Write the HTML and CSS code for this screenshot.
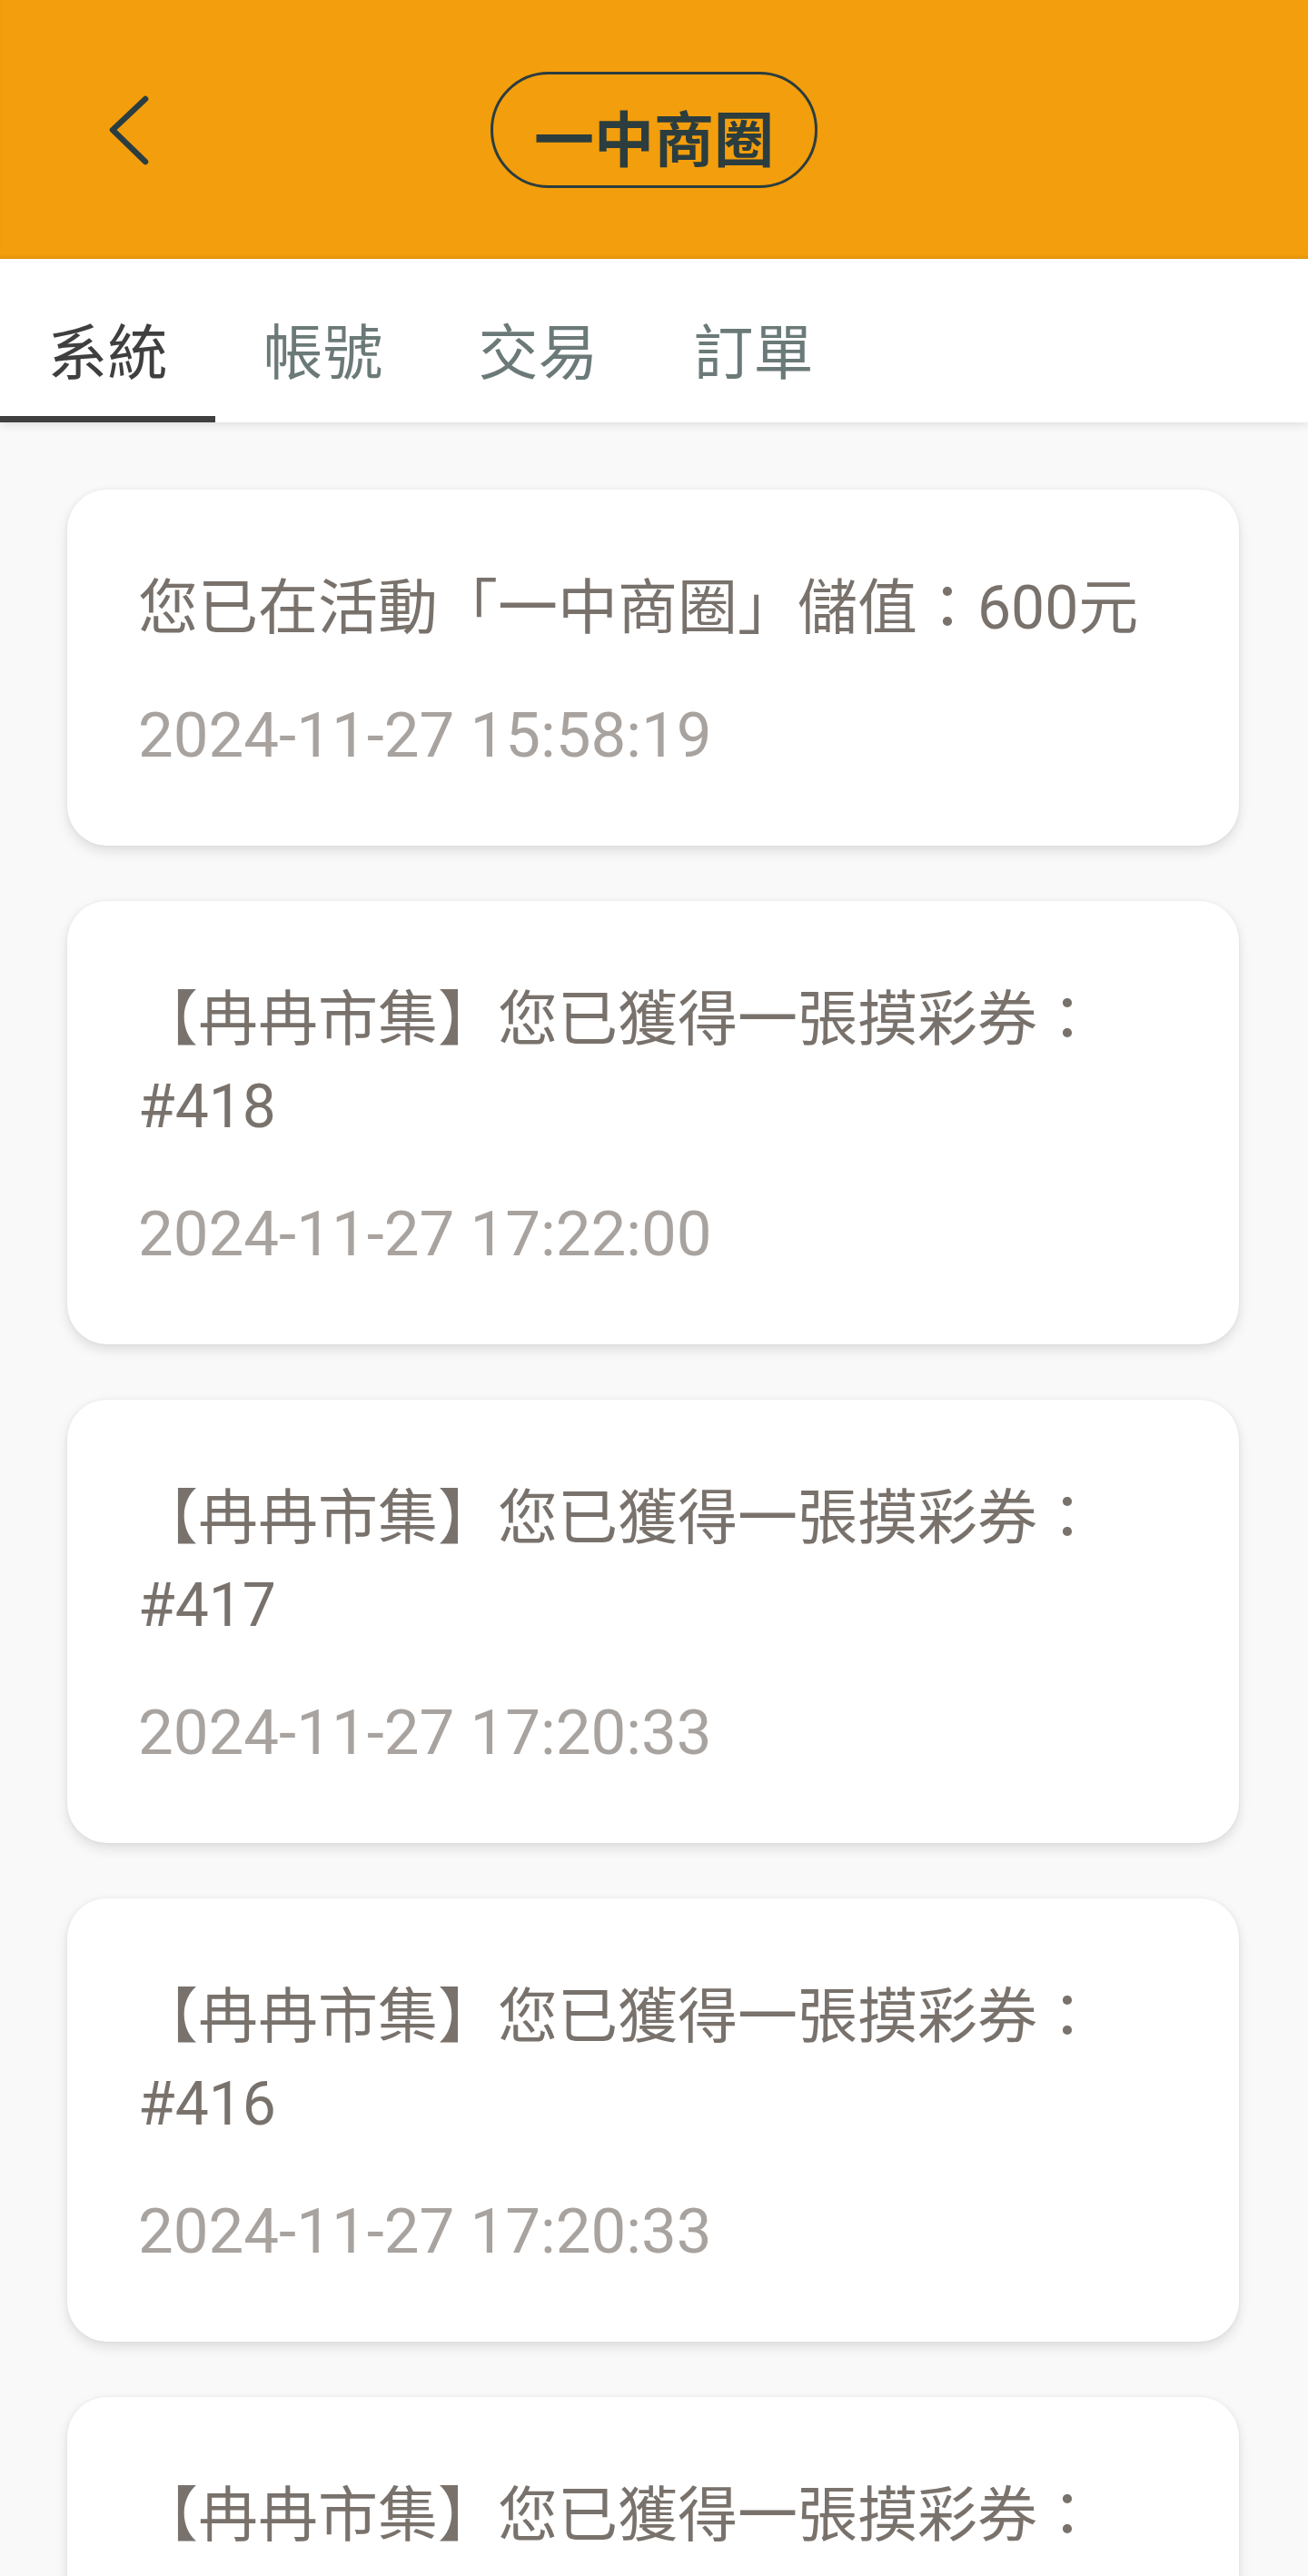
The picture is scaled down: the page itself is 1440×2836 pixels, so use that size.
FILE: index.html
```html
<!DOCTYPE html>
<html lang="zh-Hant">
<head>
<meta charset="utf-8">
<title>一中商圈</title>
<link rel="stylesheet" href="styles.css">
</head>
<body>
<div class="screen">
  <header class="topbar">
    <div class="topbar-left">
      <svg class="back" viewBox="0 0 60 84" width="60" height="84" aria-label="返回">
        <path d="M48 8 L12 42 L48 77" fill="none" stroke="#2b3d40" stroke-width="6.5" stroke-linecap="round" stroke-linejoin="round"/>
      </svg>
    </div>
    <div class="title-pill"><span>一中商圈</span></div>
    <div class="topbar-right"></div>
  </header>

  <nav class="tabs">
    <div class="tab active">系統</div>
    <div class="tab">帳號</div>
    <div class="tab">交易</div>
    <div class="tab">訂單</div>
  </nav>

  <main class="list">
    <div class="card">
      <div class="msg">您已在活動「一中商圈」儲值：600元</div>
      <div class="date">2024-11-27 15:58:19</div>
    </div>
    <div class="card">
      <div class="msg">【冉冉市集】您已獲得一張摸彩券：#418</div>
      <div class="date">2024-11-27 17:22:00</div>
    </div>
    <div class="card">
      <div class="msg">【冉冉市集】您已獲得一張摸彩券：#417</div>
      <div class="date">2024-11-27 17:20:33</div>
    </div>
    <div class="card">
      <div class="msg">【冉冉市集】您已獲得一張摸彩券：#416</div>
      <div class="date">2024-11-27 17:20:33</div>
    </div>
    <div class="card">
      <div class="msg">【冉冉市集】您已獲得一張摸彩券：#415</div>
      <div class="date">2024-11-27 17:20:33</div>
    </div>
  </main>
</div>
</body>
</html>
```

FILE: styles.css
```css
* { box-sizing: border-box; }

html, body {
  margin: 0;
  padding: 0;
  background: #f9f9f9;
  font-family: Roboto, "Noto Sans CJK TC", "Noto Sans CJK SC", sans-serif;
}

.screen {
  width: 1440px;
  height: 100vh;
  overflow: hidden;
  background: #f9f9f9;
}

/* ---------- top bar ---------- */
.topbar {
  height: 285px;
  background: #f39e0c;
  display: grid;
  grid-template-columns: 1fr auto 1fr;
  align-items: center;
  box-shadow: inset 0 -3px 3px -1px rgba(0, 0, 0, 0.06);
}

.topbar-left {
  display: flex;
  align-items: center;
}

.back {
  display: block;
  margin-left: 112px;
}

.title-pill {
  height: 128px;
  padding: 13px 45px 0;
  border: 3px solid #2b3d3f;
  border-radius: 64px;
  display: flex;
  align-items: center;
  justify-content: center;
  color: #2b3d3f;
  font-family: "Noto Sans CJK TC", "Noto Sans CJK SC", sans-serif;
  font-weight: 700;
  font-size: 66px;
  line-height: 66px;
}

/* ---------- tabs ---------- */
.tabs {
  position: relative;
  z-index: 1;
  height: 180px;
  background: #ffffff;
  display: flex;
  box-shadow: 0 3px 9px rgba(0, 0, 0, 0.10);
}

.tab {
  width: 237px;
  height: 180px;
  padding-top: 22px;
  border-bottom: 7px solid transparent;
  display: flex;
  align-items: center;
  justify-content: center;
  font-family: "Noto Sans CJK TC", "Noto Sans CJK SC", sans-serif;
  font-size: 66px;
  line-height: 66px;
  color: #6b7a78;
}

.tab.active {
  color: #3f3f3f;
  border-bottom-color: #3f3f3f;
}

/* ---------- list ---------- */
.list {
  padding: 74px 76px 0 74px;
  display: flex;
  flex-direction: column;
  gap: 61px;
}

.card {
  background: #ffffff;
  border-radius: 44px;
  padding: 83px 78px 74px 78px;
  box-shadow: 0 6px 14px rgba(0, 0, 0, 0.11), 0 0 5px rgba(0, 0, 0, 0.05);
}

.msg {
  font-size: 66px;
  line-height: 96px;
  color: #79726c;
}

.date {
  margin-top: 44px;
  font-size: 69px;
  line-height: 95px;
  color: #a8a39f;
}
```
